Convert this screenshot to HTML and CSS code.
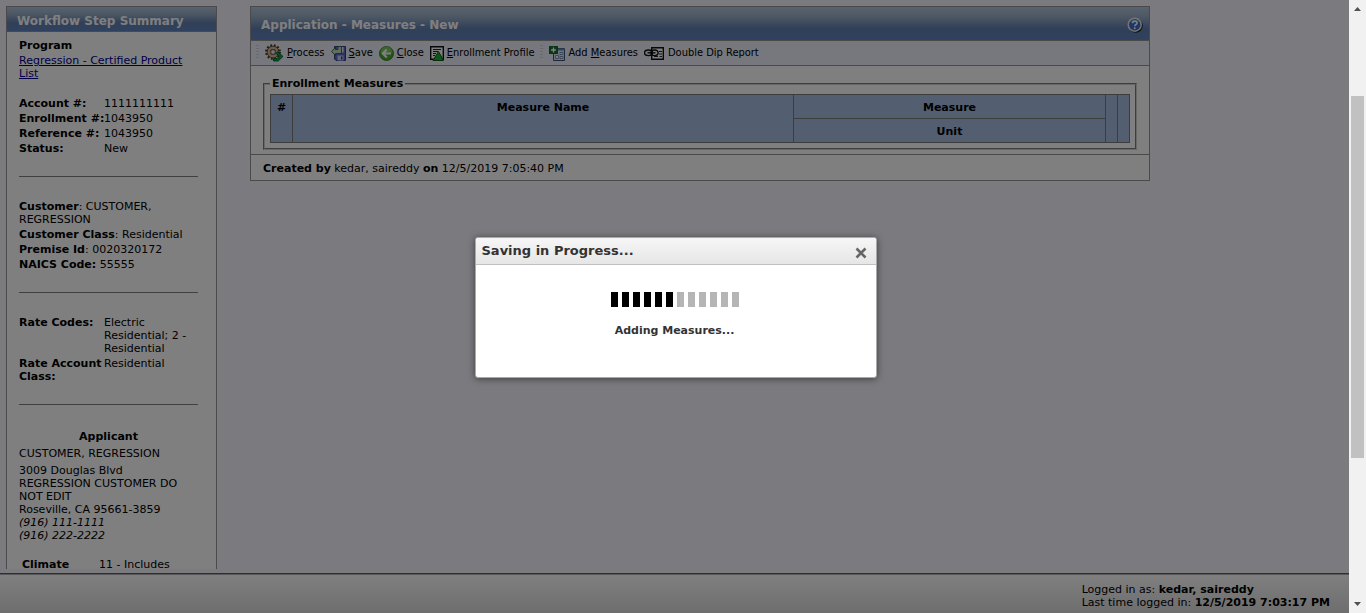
FILE: index.html
```html
<!DOCTYPE html>
<html lang="en">
<head>
<meta charset="utf-8">
<title>Application - Measures - New</title>
<link rel="stylesheet" href="styles.css">
</head>
<body>
<div class="app">
  <div class="workspace">
    <aside class="sidebar">
      <h2 class="bar sidebar-title">Workflow Step Summary</h2>
      <div class="summary">
        <section class="group program">
          <div class="row"><b>Program</b></div>
          <div class="row"><a href="#">Regression - Certified Product List</a></div>
        </section>
        <dl class="pairs group">
          <dt>Account #:</dt><dd>1111111111</dd>
          <dt class="tight">Enrollment #:</dt><dd>1043950</dd>
          <dt>Reference #:</dt><dd>1043950</dd>
          <dt>Status:</dt><dd>New</dd>
        </dl>
        <hr class="rule">
        <section class="group">
          <div class="row"><b>Customer</b>: CUSTOMER, REGRESSION</div>
          <div class="row"><b>Customer Class</b>: Residential</div>
          <div class="row"><b>Premise Id</b>: 0020320172</div>
          <div class="row"><b>NAICS Code:</b> 55555</div>
        </section>
        <hr class="rule">
        <dl class="pairs group">
          <dt>Rate Codes:</dt><dd>Electric Residential; 2 - Residential</dd>
          <dt>Rate Account Class:</dt><dd>Residential</dd>
        </dl>
        <hr class="rule">
        <section class="applicant">
          <h3 class="applicant-title">Applicant</h3>
          <div class="applicant-name">CUSTOMER, REGRESSION</div>
          <div>3009 Douglas Blvd</div>
          <div>REGRESSION CUSTOMER DO NOT EDIT</div>
          <div>Roseville, CA 95661-3859</div>
          <div><i>(916) 111-1111</i></div>
          <div><i>(916) 222-2222</i></div>
        </section>
        <dl class="pairs climate">
          <dt>Climate</dt><dd>11 - Includes</dd>
        </dl>
      </div>
    </aside>

    <main class="panel">
      <header class="bar panel-head">
        <h1 class="panel-title">Application - Measures - New</h1>
        <button class="help" aria-label="Help">
          <svg width="16" height="16" viewBox="0 0 16 16"><circle cx="8.8" cy="8.8" r="7" fill="#222"/><circle cx="7.7" cy="7.7" r="7.2" fill="#eceaea"/><circle cx="7.7" cy="7.7" r="5.7" fill="#3b6fd0"/><path d="M3.2 5.6a5 5 0 0 1 9 0Q7.700 3.500 3.200 5.600" fill="#8fb4f0"/><path d="M5.600 6.200q0-2 2.200-2t2.200 1.800q0 1.200-1.300 1.800-.9.400-.9 1.400" fill="none" stroke="#fff" stroke-width="1.600"/><circle cx="7.700" cy="11.200" r="1" fill="#fff"/></svg>
        </button>
      </header>
      <nav class="toolbar" aria-label="Actions">
        <span class="grip"></span>
        <button class="tool">
          <svg width="19" height="18" viewBox="0 0 19 18"><circle cx="8" cy="8" r="6.400" fill="none" stroke="#4a3a22" stroke-width="3" stroke-dasharray="1.700 1.651"/><circle cx="8" cy="8" r="4.400" fill="none" stroke="#4a3a22" stroke-width="3.600"/><circle cx="8" cy="8" r="4.300" fill="none" stroke="#d8bc94" stroke-width="2.400"/><circle cx="8" cy="8" r="2.300" fill="#eef0fa" stroke="#5a4a30" stroke-width=".8"/><path d="M12.500 7.500l5.500 5-4.800 4.500H8.500v-2.500h3.500l2.200-2.100-3.200-3z" fill="#159a48" stroke="#063" stroke-width=".9"/></svg>
          <span><u>P</u>rocess</span>
        </button>
        <button class="tool">
          <svg width="15" height="16" viewBox="0 0 15 16"><path d="M3.500 1.500h11v14H5l-1.500-1.500z" fill="#5a6acc" stroke="#303c90"/><path d="M6.500 2h6v5.500h-6z" fill="#e4eafa"/><path d="M6.500 10.500h6v5h-6z" fill="#c4cef0"/><path d="M10 11.500h1.500v3H10z" fill="#303c90"/><path d="M2 1.500h3.500v3H8V2.500L12 6.500 8 10.500V8.500H2z" transform="matrix(-1 0 0 1 12.500 0)" fill="#c4dcbc" stroke="#315b3c" stroke-width=".9"/></svg>
          <span><u>S</u>ave</span>
        </button>
        <button class="tool">
          <svg width="15" height="16" viewBox="0 0 15 16"><circle cx="7.500" cy="8.500" r="7" fill="#49a832" stroke="#25741c" stroke-width=".8"/><path d="M1.500 7.500a6 6 0 0 1 12 0Q7.500 9.500 1.500 7.500" fill="#7bc75c"/><path d="M7.800 4.500l-4 4 4 4M4 8.500h8" fill="none" stroke="#fff" stroke-width="2.200"/></svg>
          <span><u>C</u>lose</span>
        </button>
        <button class="tool">
          <svg width="14" height="16" viewBox="0 0 14 16"><path d="M.7 1.700h12.600v12.600H.7z" fill="#fff" stroke="#111" stroke-width="1.400"/><path d="M3 4.500h8M3 6.500h5M3 8.500h3M3 10.500h2" stroke="#222" stroke-width="1"/><path d="M8.500 6.500l5 9H3z" fill="#23a832" stroke="#086010"/></svg>
          <span><u>E</u>nrollment Profile</span>
        </button>
        <span class="grip"></span>
        <button class="tool">
          <svg width="16" height="16" viewBox="0 0 16 16"><path d="M4.500 3.500h11v12h-11z" fill="#dbe5f7" stroke="#3d5478"/><path d="M5 3.500h10.500v2H5z" fill="#6686bb"/><path d="M6.500 10.500h3v3h-3zM11 7.500h3v2h-3zM11 11.500h3v2h-3z" fill="#fff" stroke="#637da8" stroke-width=".8"/><path d="M0 1h9v8H0z" fill="#0d6f2c"/><path d="M4.500 2.500v5M2 5h5" stroke="#fff" stroke-width="1.400"/></svg>
          <span>Add <u>M</u>easures</span>
        </button>
        <button class="tool">
          <svg width="21" height="16" viewBox="0 0 21 16"><path d="M7.700 2.700h11.600v11.600H7.700z" fill="#fff" stroke="#111" stroke-width="1.400"/><path d="M15 6.500h3M15 9h3M10 11.500h4M15.500 11.500H18" stroke="#222"/><g fill="none" stroke="#111" stroke-width="1.400"><ellipse cx="4.500" cy="7.800" rx="4" ry="2.800"/><ellipse cx="10.500" cy="7.800" rx="3.600" ry="2.800"/><path d="M3.500 7.800h8"/></g></svg>
          <span>Double Dip Report</span>
        </button>
      </nav>
      <div class="panel-body">
        <fieldset class="measures">
          <legend>Enrollment Measures</legend>
          <table class="grid">
            <colgroup><col class="c-num"><col><col class="c-measure"><col class="c-act"><col class="c-act"></colgroup>
            <thead>
              <tr><th rowspan="2">#</th><th rowspan="2">Measure Name</th><th>Measure</th><th rowspan="2"></th><th rowspan="2"></th></tr>
              <tr><th>Unit</th></tr>
            </thead>
          </table>
        </fieldset>
      </div>
      <footer class="panel-foot"><b>Created by</b> kedar, saireddy <b>on</b> 12/5/2019 7:05:40 PM</footer>
    </main>
  </div>

  <footer class="status">
    <div class="login">
      <div>Logged in as: <b>kedar, saireddy</b></div>
      <div>Last time logged in: <b>12/5/2019 7:03:17 PM</b></div>
    </div>
  </footer>

  <div class="overlay">
    <div class="dialog" role="dialog" aria-labelledby="dialog-title">
      <div class="dialog-head">
        <h2 class="dialog-title" id="dialog-title">Saving in Progress...</h2>
        <button class="dialog-close" aria-label="Close">
          <svg width="12" height="12" viewBox="0 0 12 12"><path d="M1.500 1.500l9 9M10.500 1.500l-9 9" stroke="#666" stroke-width="2.600"/></svg>
        </button>
      </div>
      <div class="dialog-body">
        <div class="progress" role="progressbar" aria-label="Adding Measures" aria-valuenow="6" aria-valuemin="0" aria-valuemax="12">
          <i class="on"></i><i class="on"></i><i class="on"></i><i class="on"></i><i class="on"></i><i class="on"></i><i></i><i></i><i></i><i></i><i></i><i></i>
        </div>
        <p class="message">Adding Measures...</p>
      </div>
    </div>
  </div>
</div>

<div class="scrollbar" aria-hidden="true">
  <svg class="arrow" width="7" height="4" viewBox="0 0 7 4"><path d="M0 4L3.500 0 7 4z" fill="#505050"/></svg>
  <div class="track"><div class="thumb"></div></div>
  <svg class="arrow" width="7" height="4" viewBox="0 0 7 4"><path d="M0 0L3.500 4 7 0z" fill="#505050"/></svg>
</div>
</body>
</html>
```
FILE: styles.css
```css
* { box-sizing: border-box; }

body {
  margin: 0;
  height: 100vh;
  display: flex;
  overflow: hidden;
  background: #f7f5ff;
  color: #000;
  font: 11px/13px Verdana, "DejaVu Sans", sans-serif;
}

h1, h2, h3, p, dl, dd { margin: 0; }
button { font: inherit; color: inherit; background: none; border: 0; padding: 0; }
svg { display: block; flex: none; }
a { color: #000090; }

.app {
  position: relative;
  flex: 1;
  min-width: 0;
  display: flex;
  flex-direction: column;
}

.workspace {
  flex: 1;
  min-height: 0;
  display: flex;
  align-items: flex-start;
  gap: 33px;
  padding: 6px 6px 0;
  margin-bottom: 4px;
  overflow: hidden;
}

.bar {
  background: linear-gradient(#aec6dc, #a0b4cc 25%, #6480b0 65%, #5e84c0);
  border-bottom: 1px solid #949494;
  color: #fff;
  font-size: 12px;
  line-height: 16px;
  font-weight: bold;
}

/* Sidebar */
.sidebar { flex: none; width: 211px; background: #fff; border: 1px solid #949494; }
.sidebar-title { padding: 6px 10px 2px; }
.summary { padding: 6px 18px 20px 12px; }
.row { padding: 1px 0; }
.program { margin-bottom: 15px; }
.pairs { display: grid; grid-template-columns: 85px 1fr; row-gap: 2px; padding: 1px 0; }
.pairs dt { font-weight: bold; }
.pairs .tight { white-space: nowrap; }
.rule { border: 0; border-top: 1px solid #808080; margin: 20px 0 22px; }
.applicant-title { font-size: 11px; line-height: 13px; text-align: center; margin: 25px 0 4px; }
.applicant-name { margin-bottom: 4px; }
.climate { margin-top: 15px; padding-left: 3px; grid-template-columns: 77px 1fr; }

/* Main panel */
.panel { flex: 1; min-width: 0; max-width: 900px; background: #fff; border: 1px solid #949494; }
.panel-head { display: flex; align-items: center; justify-content: space-between; padding: 10px 6px 7px 10px; }
.panel-title { font-size: 12px; line-height: 16px; }
.help { height: 16px; }

.toolbar {
  display: flex;
  align-items: center;
  gap: 6px;
  height: 25px;
  padding: 0 5px 1px;
  background: #eef0fa;
  border-bottom: 1px solid #949494;
  font-family: Tahoma, "DejaVu Sans Condensed", "DejaVu Sans", sans-serif;
}
.tool { display: flex; align-items: center; gap: 3px; white-space: nowrap; }
.grip { width: 3px; height: 15px; background: repeating-linear-gradient(#d2d4de 0 1px, #eef0fa 1px 3px); }

.panel-body { padding: 11px 12px 4px; border-bottom: 1px solid #949494; }
.measures { margin: 0; min-width: 0; padding: 4px 5px 5px; border: 2px groove #d0d0d0; }
.measures legend { font-weight: bold; padding: 0 2px; }

.grid { width: 100%; table-layout: fixed; border-collapse: collapse; background: #a6bce0; }
.grid th { height: 24px; padding: 6px 2px 4px; border: 1px solid #7a7a7a; vertical-align: top; }
.c-num { width: 22px; }
.c-measure { width: 312px; }
.c-act { width: 12px; }
.panel-foot { padding: 7px 12px 5px; }

/* Status bar */
.status {
  flex: none;
  display: flex;
  justify-content: flex-end;
  height: 40px;
  padding: 8px 19px 0;
  border-top: 2px groove #b0b0b0;
  background: linear-gradient(#fff, #dcdcdc);
}

/* Modal */
.overlay {
  position: absolute;
  inset: 0;
  display: flex;
  align-items: center;
  justify-content: center;
  padding: 2px 0 0 2px;
  background: rgba(0, 0, 0, .5);
}
.dialog {
  width: 402px;
  background: #fff;
  border: 1px solid #aaa;
  border-radius: 3px;
  box-shadow: 0 1px 7px rgba(0, 0, 0, .5);
  color: #333;
  overflow: hidden;
}
.dialog-head {
  display: flex;
  align-items: center;
  justify-content: space-between;
  padding: 5px 9px 5px 6px;
  border-bottom: 1px solid #c0c0c0;
  background: linear-gradient(#f6f6f6, #e6e6e6);
}
.dialog-title { font-size: 13px; line-height: 16px; }
.dialog-close { margin-top: 3px; }
.dialog-body { display: flex; flex-direction: column; align-items: center; gap: 17px; padding: 27px 2px 40px 0; }
.progress { display: flex; gap: 4px; }
.progress i { width: 7px; height: 15px; background: #b5b5b5; }
.progress .on { background: #000; }
.message { font-weight: bold; }

/* Page scrollbar */
.scrollbar { flex: none; width: 17px; display: flex; flex-direction: column; align-items: center; background: #f1f1f1; padding: 7px 2px; }
.track { flex: 1; align-self: stretch; display: flex; flex-direction: column; }
.track::before { content: ""; flex: 85; }
.thumb { flex: 362; background: #c1c1c1; }
.track::after { content: ""; flex: 144; }
```
